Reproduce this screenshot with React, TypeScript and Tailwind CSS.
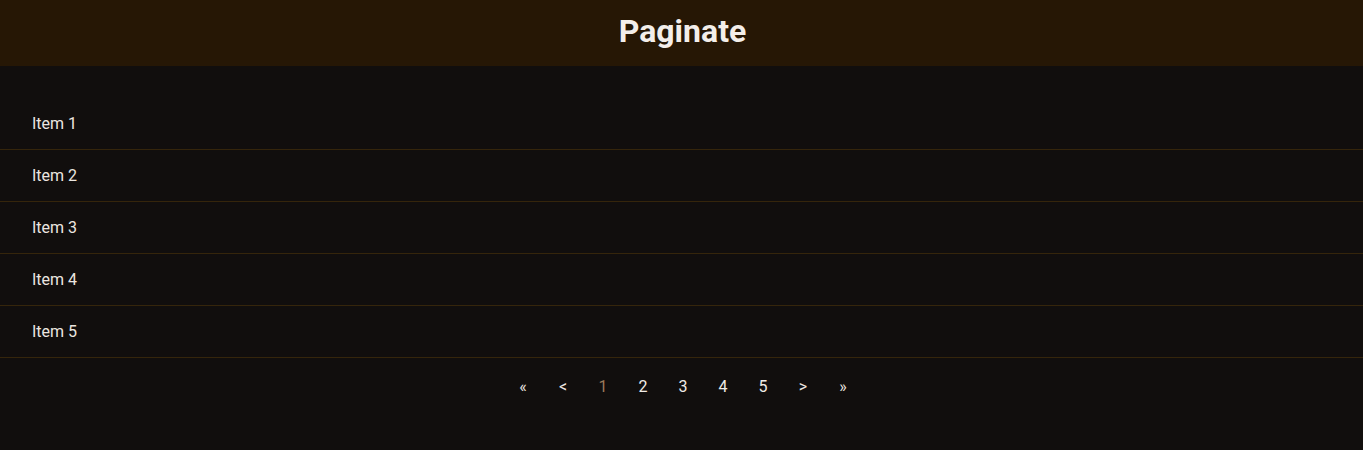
import { useState } from 'react';

const items = ['Item 1', 'Item 2', 'Item 3', 'Item 4', 'Item 5'];

const App = () => {
  const [page, setPage] = useState(1);
  const pages = [1, 2, 3, 4, 5];

  return (
    <div className="min-h-[450px] bg-[#110e0d] font-['Roboto',sans-serif] text-[#ece6e0]">
      {/* Header */}
      <header className="h-[66px] bg-[#261705] flex items-center justify-center pb-1">
        <h1 className="text-[32px] font-bold text-[#f3eeea] pl-[2px]">Paginate</h1>
      </header>

      {/* List */}
      <ul className="pt-8">
        {items.map((item) => (
          <li key={item} className="h-[52px] flex items-center px-8 text-base border-b border-[#35250b]">
            {item}
          </li>
        ))}
      </ul>

      {/* Pagination */}
      <nav className="flex justify-center mt-[9px] pl-[3px]">
        <button className="w-10 h-10 text-base">«</button>
        <button className="w-10 h-10 text-base">&lt;</button>
        {pages.map((p) => (
          <button
            key={p}
            onClick={() => setPage(p)}
            className={`w-10 h-10 text-base ${p === page ? 'text-[#9b7a5b]' : 'text-[#f0ebe6]'}`}
          >
            {p}
          </button>
        ))}
        <button className="w-10 h-10 text-base">&gt;</button>
        <button className="w-10 h-10 text-base">»</button>
      </nav>
    </div>
  );
};

export default App;
